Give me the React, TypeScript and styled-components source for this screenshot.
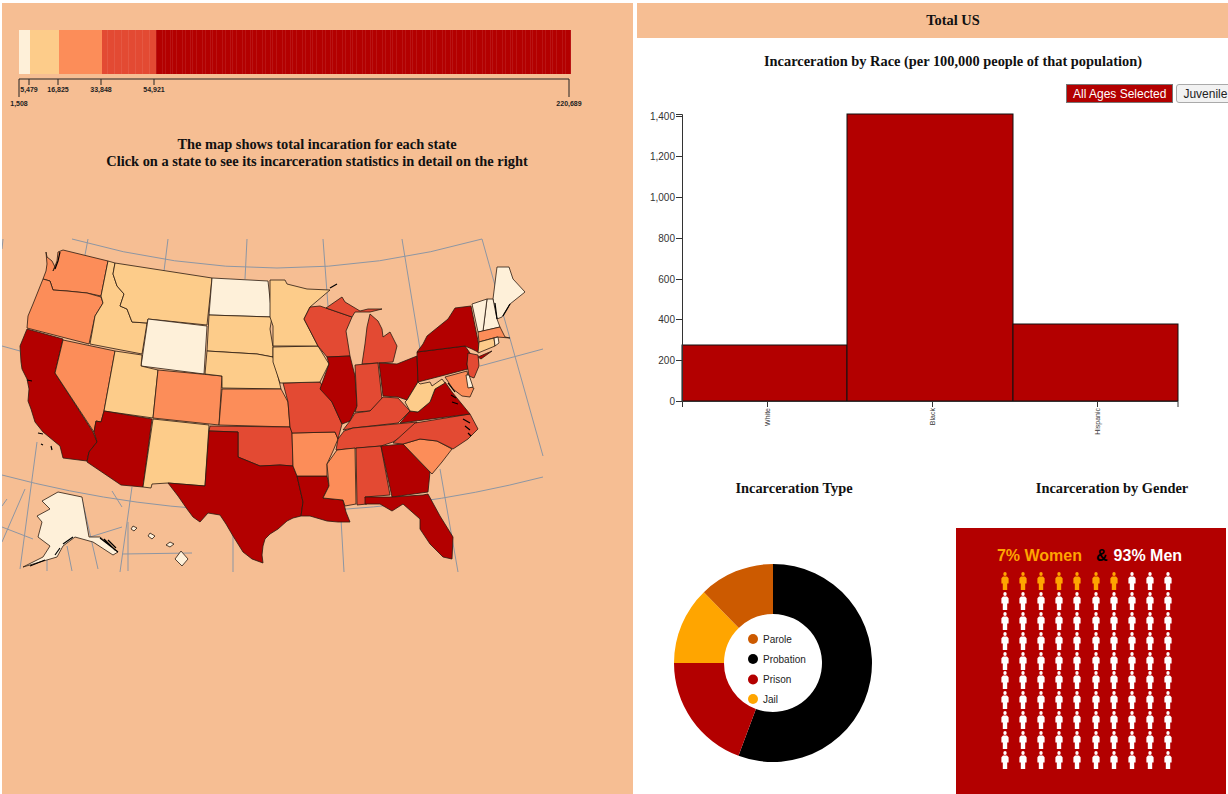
import React from "react";
import styled, { createGlobalStyle } from "styled-components";

const C1 = "#fef0d9";
const C2 = "#fdcc8a";
const C3 = "#fc8d59";
const C4 = "#e34a33";
const C5 = "#b30000";
const ORANGE = "#ffa500";
const PAGE_BG = "#f6be93";

const states: [string, string, string][] = [
  ["WA", C3, "46,253 47,258 52,262 55,268 53,272 57,262 58,253 63,251 108,262 101,297 87,294 67,292 53,291 50,282 43,280 46,272 47,265"],
  ["OR", C3, "43,280 50,282 53,291 67,292 87,294 101,298 103,304 95,317 89,345 27,329 28,317 33,305"],
  ["CA", C5, "27,330 63,340 55,374 93,433 97,443 89,453 87,462 63,459 60,447 43,433 35,423 31,410 28,402 29,390 27,380 22,370 21,363 20,347"],
  ["NV", C3, "63,341 115,352 104,412 101,423 96,422 94,433 55,374"],
  ["ID", C2, "108,262 115,264 113,275 117,287 124,295 120,307 127,310 132,323 147,324 142,355 90,345 95,317 103,304 101,297"],
  ["MT", C2, "115,264 212,279 207,326 148,320 147,324 132,323 127,310 120,307 124,295 117,287 113,275"],
  ["WY", C1, "148,320 207,327 204,375 141,367"],
  ["UT", C2, "115,352 142,356 141,367 158,371 153,419 104,412"],
  ["CO", C3, "158,371 222,377 219,426 153,419"],
  ["AZ", C5, "104,412 152,420 143,488 121,486 87,463 89,453 97,443 94,433 96,422 101,423"],
  ["NM", C2, "153,420 209,426 205,487 168,484 152,485 151,489 143,488"],
  ["ND", C1, "212,279 268,282 272,318 209,316"],
  ["SD", C2, "209,316 272,318 270,330 273,348 273,358 257,355 207,352"],
  ["NE", C2, "207,352 257,355 273,358 277,373 281,390 222,389 222,377 205,375"],
  ["KS", C3, "222,390 281,390 288,403 290,428 219,426"],
  ["OK", C4, "210,427 290,428 292,433 293,467 280,466 260,467 238,458 238,433 209,432"],
  ["TX", C5, "209,432 238,433 238,458 260,467 280,466 293,467 297,477 303,503 301,517 293,519 287,522 278,530 270,535 265,540 263,547 262,556 263,564 252,560 243,553 238,545 233,537 226,525 220,516 208,514 200,523 193,518 187,510 178,497 168,484 205,487"],
  ["LA", C5, "297,477 327,477 329,487 323,499 343,501 346,513 350,523 338,523 327,522 310,517 301,517 303,503"],
  ["AR", C3, "292,434 335,433 338,440 333,452 327,465 327,477 297,477 293,467"],
  ["MO", C4, "283,384 320,383 332,403 342,425 338,440 335,433 292,434 290,428 288,403"],
  ["IA", C2, "273,348 318,347 329,365 320,383 280,384 273,363"],
  ["MN", C2, "270,281 285,281 287,285 307,290 330,291 310,308 304,320 318,347 273,347 273,327 270,318"],
  ["WI", C4, "310,308 320,307 352,318 346,332 350,357 327,358 318,347 304,320"],
  ["MI-U", C4, "326,309 342,298 345,303 360,312 368,310 382,310 370,313 355,313 352,318"],
  ["MI-L", C4, "370,315 378,322 382,330 383,338 390,333 397,347 393,363 362,365 365,345 367,328"],
  ["IL", C5, "327,358 350,357 355,377 357,407 350,422 342,425 332,403 320,390 329,365"],
  ["IN", C4, "355,366 378,364 382,400 370,412 355,413 357,407"],
  ["OH", C5, "379,364 397,365 417,357 418,383 407,401 398,398 383,397"],
  ["KY", C4, "355,414 370,412 383,398 398,399 410,412 398,424 353,429 343,431 350,422"],
  ["TN", C4, "344,432 353,429 417,423 410,432 393,443 381,447 336,451 338,440"],
  ["MS", C3, "337,451 355,449 356,505 345,507 343,501 323,499 329,487 327,465"],
  ["AL", C4, "356,449 381,447 390,496 365,498 367,505 357,506"],
  ["GA", C5, "381,447 403,445 430,473 428,493 392,498"],
  ["FL", C5, "365,498 392,498 423,496 428,495 440,517 453,538 452,560 443,558 430,545 420,530 420,520 403,505 392,512 380,505 365,505"],
  ["SC", C3, "403,445 420,440 437,442 452,450 442,463 432,475"],
  ["NC", C4, "393,444 415,424 470,415 478,430 468,440 453,450 437,442 420,440 403,445"],
  ["VA", C5, "400,424 410,412 418,413 430,403 435,390 445,383 452,393 470,415"],
  ["WV", C2, "418,383 420,385 430,383 432,387 442,380 445,384 435,390 430,403 418,413 410,412 405,403 407,401"],
  ["PA", C5, "417,353 465,347 470,354 467,365 468,370 418,383"],
  ["NY", C5, "427,337 448,320 455,309 471,307 479,347 478,353 472,350 465,347 417,353 423,345"],
  ["NY-LI", C5, "478,358 492,352 481,360"],
  ["NJ", C4, "468,354 478,356 479,367 474,379 469,377 467,365"],
  ["MD", C3, "445,378 467,372 470,388 474,389 470,398 462,397 453,390"],
  ["DE", C1, "466,376 469,376 473,388 468,389"],
  ["ME", C1, "497,268 509,268 513,280 525,293 510,305 502,318 497,320 493,300"],
  ["NH", C1, "487,300 493,300 497,320 500,328 483,332"],
  ["VT", C1, "472,305 487,300 483,332 478,333"],
  ["MA", C3, "478,333 500,328 505,338 510,339 497,338 479,343"],
  ["CT", C2, "479,343 494,339 495,347 478,354"],
  ["RI", C1, "494,339 498,338 499,344 495,347"],
  ["AK", C1, "42,502 58,493 82,498 89,538 100,538 118,553 113,556 93,543 75,538 63,547 57,558 23,568 43,558 50,547 38,538 42,523 37,517 50,510"],
  ["HI", C1, "181,552 188,560 182,567 175,560"],
  ["HI2", C1, "170,543 174,545 170,548 166,546"],
  ["HI3", C1, "150,534 155,537 152,540 148,537"],
  ["HI4", C1, "133,527 137,529 134,532 131,530"],
];

const graticule = [
  "M72 240Q277 298 482 240",
  "M2 347L20 352",
  "M480 367L543 350",
  "M2 476Q272 548 543 478",
  "M88 240L85 256",
  "M168 240L164 272",
  "M247 240L245 280",
  "M323 240L328 307",
  "M402 240L420 350",
  "M482 240L543 457",
  "M440 470L458 573",
  "M341 520L344 573",
  "M3 240L2 250",
  "M37 443L20 570",
  "M2 543L25 490",
  "M132 488L120 573",
  "M128 523V572",
  "M7 500L2 507",
  "M112 492L122 508",
  "M82 500L98 570",
  "M67 547L72 572",
  "M47 557V572",
  "M233 530V573",
  "M122 555L192 554",
  "M90 538L122 528",
  "M2 528L33 540",
];

// coast details that read as solid black in the map
const inkMarks = [
  "M60 253L58 262L55 270",
  "M27 381L32 382",
  "M38 434L43 435M41 445L43 446M51 447L52 451",
  "M451 396L456 399M452 403L458 405M448 384L455 393",
  "M463 420L470 424M465 427L470 431M468 434L471 437",
  "M100 539L118 553M104 540L115 551M108 541L116 549",
  "M73 538L63 545M60 549L55 556M45 561L30 567",
  "M330 289L337 285",
  "M510 305L503 317M497 320L495 304",
];

const legendTicks = [
  { x: 29, label: "5,479" },
  { x: 58, label: "16,825" },
  { x: 101, label: "33,848" },
  { x: 154, label: "54,921" },
];

const legendBlocks = [
  { x: 19, w: 11, fill: C1 },
  { x: 30, w: 29, fill: C2 },
  { x: 59, w: 43, fill: C3 },
  { x: 102, w: 54, fill: C4 },
  { x: 156, w: 415, fill: C5 },
];

// thin bright seams between the legend's many small rects
const seams: number[] = [];
for (let x = 107, i = 0; x < 571; i++) {
  seams.push(x);
  x += x < 156 ? 7 : 2 + ((i * 7) % 5);
}

const races = [
  { x: 682, y: 345, name: "White", mid: 767 },
  { x: 847, y: 114, name: "Black", mid: 932 },
  { x: 1013, y: 324, name: "Hispanic", mid: 1097 },
];

const yTicks = [
  { y: 401, label: "0" },
  { y: 360, label: "200" },
  { y: 319, label: "400" },
  { y: 279, label: "600" },
  { y: 238, label: "800" },
  { y: 197, label: "1,000" },
  { y: 156, label: "1,200" },
  { y: 116, label: "1,400" },
];

const polar = (deg: number, r: number) => {
  const a = (deg * Math.PI) / 180;
  return `${773 + r * Math.sin(a)} ${663 - r * Math.cos(a)}`;
};

const slice = (from: number, to: number) => {
  const big = to - from > 180 ? 1 : 0;
  return `M${polar(from, 99)}A99 99 0 ${big} 1 ${polar(to, 99)}L${polar(to, 49)}A49 49 0 ${big} 0 ${polar(from, 49)}Z`;
};

const donut = [
  { from: 0, to: 200.4, fill: "#000" },
  { from: 200.4, to: 270, fill: C5 },
  { from: 270, to: 315.7, fill: ORANGE },
  { from: 315.7, to: 360, fill: "#cc5a00" },
];

const donutLegend = [
  { y: 639, label: "Parole", fill: "#cc5a00" },
  { y: 659, label: "Probation", fill: "#000" },
  { y: 679.5, label: "Prison", fill: C5 },
  { y: 699, label: "Jail", fill: ORANGE },
];

const Person: React.FC<{ color: string }> = ({ color }) => (
  <svg width="8" height="18" viewBox="0 0 8 18" fill={color}>
    <ellipse cx="4" cy="2" rx="1.7" ry="2" />
    <path d="M2 4.6H6L7.6 6.2V11.4H6.2V18H1.8V11.4H.4V6.2Z" />
  </svg>
);

const App: React.FC = () => {
  return (
    <Page>
      <GlobalStyle />
      <LeftPanel>
        <ChartSvg width="631" height="110" viewBox="2 3 631 110">
          {legendBlocks.map((b) => (
            <rect key={b.x} x={b.x} y={30} width={b.w} height={44} fill={b.fill} />
          ))}
          {seams.map((x) => (
            <rect key={x} x={x} y={30} width={1} height={44} fill="#fff" opacity={0.08} />
          ))}
          <path d="M19 97V79H569V97" fill="none" stroke="#222" />
          {legendTicks.map((t) => (
            <g key={t.x}>
              <path d={`M${t.x} 79V85`} stroke="#222" />
              <LegendLabel x={t.x} y={92} textAnchor="middle">{t.label}</LegendLabel>
            </g>
          ))}
          <LegendLabel x={19} y={106} textAnchor="middle">1,508</LegendLabel>
          <LegendLabel x={569} y={106} textAnchor="middle">220,689</LegendLabel>
        </ChartSvg>
        <MapNote>
          The map shows total incaration for each state
          <br />
          Click on a state to see its incarceration statistics in detail on the right
        </MapNote>
        <MapSvg width="631" height="350" viewBox="2 230 631 350">
          <path d={graticule.join("")} fill="none" stroke="#8d96a3" strokeWidth="1" />
          {states.map(([id, fill, points]) => (
            <polygon key={id} points={points} fill={fill} stroke="#2a1a10" strokeWidth="0.8" strokeLinejoin="round" />
          ))}
          <path d={inkMarks.join("")} fill="none" stroke="#000" strokeWidth="1.2" />
        </MapSvg>
      </LeftPanel>

      <RightPanel>
        <Header>Total US</Header>
        <RaceTitle>Incarceration by Race (per 100,000 people of that population)</RaceTitle>
        <ButtonRow>
          <AgeButton $active>All Ages Selected</AgeButton>
          <AgeButton>Juvenile</AgeButton>
        </ButtonRow>
        <ChartSvg width="591" height="342" viewBox="637 103 591 342">
          {races.map((r) => (
            <rect key={r.name} x={r.x} y={r.y} width={r.name === "Black" ? 166 : 165} height={401 - r.y} fill={C5} stroke="#111" />
          ))}
          <path d="M676 114.5H682.5V401.5H676" fill="none" stroke="#333" />
          <path d="M682.5 407V401.5H1178V407" fill="none" stroke="#333" />
          {yTicks.map((t) => (
            <g key={t.y}>
              <path d={`M676 ${t.y + 0.5}H682`} stroke="#333" />
              <AxisLabel x={675} y={t.y + 3.5} textAnchor="end">{t.label}</AxisLabel>
            </g>
          ))}
          {races.map((r) => (
            <g key={r.name}>
              <path d={`M${r.mid + 0.5} 401V407`} stroke="#333" />
              <BarLabel transform={`translate(${r.mid + 2.5} 408) rotate(-90)`} textAnchor="end">{r.name}</BarLabel>
            </g>
          ))}
        </ChartSvg>
        <TitleRow>
          <TypeTitle>Incarceration Type</TypeTitle>
          <GenderTitle>Incarceration by Gender</GenderTitle>
        </TitleRow>
        <BottomRow>
          <ChartSvg width="319" height="266" viewBox="637 528 319 266">
            {donut.map((d) => (
              <path key={d.fill} d={slice(d.from, d.to)} fill={d.fill} />
            ))}
            {donutLegend.map((l) => (
              <g key={l.label}>
                <circle cx={753} cy={l.y} r={5} fill={l.fill} />
                <DonutLabel x={763} y={l.y + 3.5}>{l.label}</DonutLabel>
              </g>
            ))}
          </ChartSvg>
          <GenderPanel>
            <GenderHeading>
              <GenderWord $color={ORANGE}>7% Women</GenderWord>
              <GenderAnd>&amp;</GenderAnd>
              <GenderWord $color="#fff">93% Men</GenderWord>
            </GenderHeading>
            <PeopleGrid>
              {Array.from({ length: 100 }, (_, i) => (
                <Person key={i} color={i < 7 ? ORANGE : "#fff"} />
              ))}
            </PeopleGrid>
          </GenderPanel>
        </BottomRow>
      </RightPanel>
    </Page>
  );
};

export default App;

const GlobalStyle = createGlobalStyle`
  html, body {
    margin: 0;
    padding: 0;
    background: #fff;
    overflow: hidden;
  }
`;

const Page = styled.div`
  display: grid;
  grid-template-columns: 631px 591px;
  column-gap: 4px;
  width: 1228px;
  height: 794px;
  padding: 3px 0 0 2px;
  box-sizing: border-box;
  overflow: hidden;
  color: #111;
  font-family: "Liberation Serif", serif;
`;

const LeftPanel = styled.section`
  display: flex;
  flex-direction: column;
  background: ${PAGE_BG};
  height: 791px;
`;

const ChartSvg = styled.svg`
  display: block;
  flex: none;
`;

const MapSvg = styled(ChartSvg)`
  margin-top: 59px;
`;

const LegendLabel = styled.text`
  font-family: "Liberation Sans", sans-serif;
  font-size: 7px;
  font-weight: 700;
  fill: #222;
`;

const MapNote = styled.p`
  margin: 23px 0 0;
  font-size: 14.4px;
  font-weight: 700;
  line-height: 17px;
  text-align: center;
  padding-right: 1px;
`;

const RightPanel = styled.section`
  display: flex;
  flex-direction: column;
  min-width: 0;
  overflow: hidden;
`;

const Header = styled.div`
  flex: none;
  height: 35px;
  padding-left: 41px;
  line-height: 35px;
  background: ${PAGE_BG};
  font-size: 14.4px;
  font-weight: 700;
  text-align: center;
`;

const RaceTitle = styled.h2`
  margin: 15px 0 0;
  padding-left: 41px;
  font-size: 14.4px;
  line-height: 16px;
  text-align: center;
`;

const ButtonRow = styled.div`
  display: flex;
  flex: none;
  gap: 3px;
  height: 19px;
  margin-top: 15px;
  padding-left: 429px;
  overflow: hidden;
`;

const AgeButton = styled.button<{ $active?: boolean }>`
  flex: none;
  height: 19px;
  padding: 0 6px;
  font-family: "Liberation Sans", sans-serif;
  font-size: 12px;
  color: ${(p) => (p.$active ? "#fff" : "#222")};
  background: ${(p) => (p.$active ? C5 : "#f2f2f2")};
  border: 1px solid ${(p) => (p.$active ? "#777" : "#aaa")};
  border-radius: ${(p) => (p.$active ? "0" : "3px")};
`;

const AxisLabel = styled.text`
  font-family: "Liberation Sans", sans-serif;
  font-size: 10px;
  fill: #333;
`;

const BarLabel = styled.text`
  font-family: "Liberation Sans", sans-serif;
  font-size: 7px;
  fill: #333;
`;

const TitleRow = styled.div`
  display: grid;
  flex: none;
  grid-template-columns: 319px 272px;
  height: 16px;
  margin-top: 35px;
  font-size: 14.4px;
  font-weight: 700;
  line-height: 16px;
  text-align: center;
`;

const TypeTitle = styled.div`
  padding-right: 5px;
`;

const GenderTitle = styled.div`
  padding-left: 40px;
`;

const BottomRow = styled.div`
  display: grid;
  flex: none;
  grid-template-columns: 319px 270px;
  height: 266px;
  margin-top: 32px;
`;

const DonutLabel = styled.text`
  font-family: "Liberation Sans", sans-serif;
  font-size: 10px;
  fill: #222;
`;

const GenderPanel = styled.div`
  display: flex;
  flex-direction: column;
  align-items: center;
  background: ${C5};
`;

const GenderHeading = styled.div`
  display: flex;
  margin-top: 19px;
  margin-right: 3px;
  font-family: "Liberation Sans", sans-serif;
  font-size: 16px;
  font-weight: 700;
  line-height: 18px;
`;

const GenderWord = styled.span<{ $color: string }>`
  color: ${(p) => p.$color};
`;

const GenderAnd = styled.span`
  margin: 0 6px 0 14px;
  color: #000;
`;

const PeopleGrid = styled.div`
  display: grid;
  grid-template-columns: repeat(10, 8px);
  grid-auto-rows: 18px;
  column-gap: 10.1px;
  row-gap: 1.9px;
  margin: 7px 11px 0 2px;

  svg {
    display: block;
  }
`;
